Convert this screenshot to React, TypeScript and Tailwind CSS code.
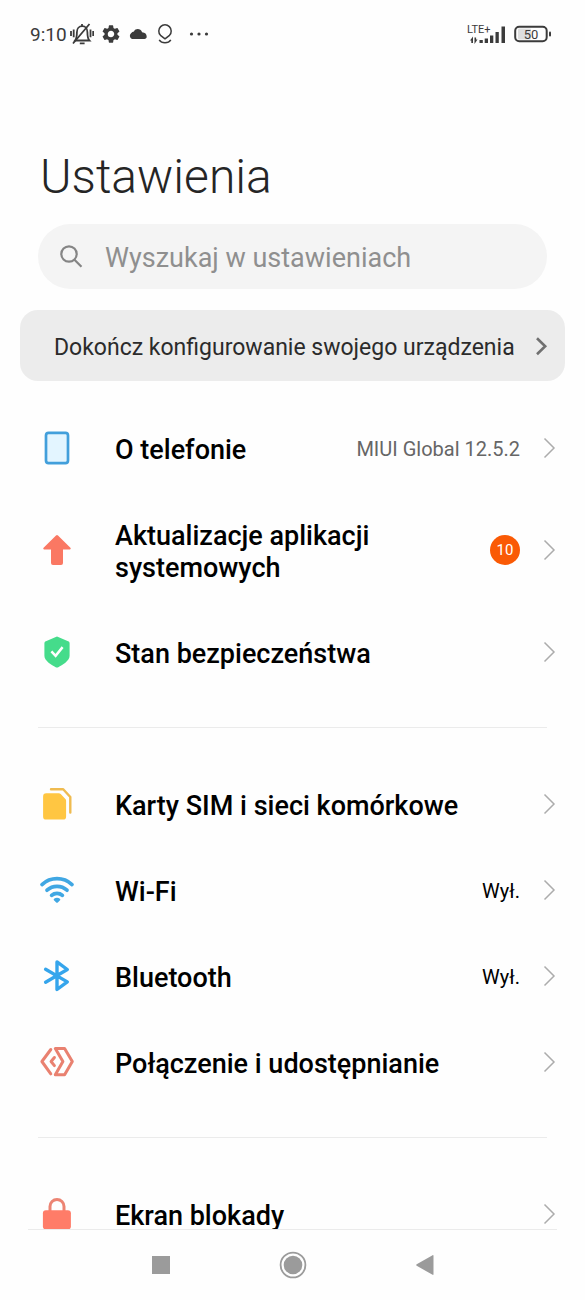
import type { ReactNode } from 'react';

function Chevron({ bold = false }: { bold?: boolean }) {
  return (
    <svg className="h-6 w-4 shrink-0" viewBox="0 0 16 24" fill="none" aria-hidden="true">
      {bold ? (
        <path d="M4 4.200 12.200 12.200 4 20.200" stroke="#707070" strokeWidth="2.600" />
      ) : (
        <path d="M3.500 2.500 13 12 3.500 21.500" stroke="#acacac" strokeWidth="1.500" />
      )}
    </svg>
  );
}

function Icon({ children }: { children: ReactNode }) {
  return (
    <svg className="size-9 shrink-0" viewBox="0 0 36 36" fill="none" aria-hidden="true">
      {children}
    </svg>
  );
}

const phoneIcon = (
  <Icon>
    <rect x="7" y="2.800" width="22" height="30.400" rx="2.600" fill="#e3f5ff" stroke="#429fdb" strokeWidth="2.700" />
  </Icon>
);

const updateIcon = (
  <Icon>
    <path
      d="M17 3.400a1.400 1.400 0 0 1 2 0L31.400 15.800c.7.800.3 1.600-.6 1.600H24V31a2 2 0 0 1-2 2h-8a2 2 0 0 1-2-2V17.400H5.200c-.9 0-1.300-.8-.6-1.600z"
      fill="#fa7863"
    />
  </Icon>
);

const shieldIcon = (
  <Icon>
    <path
      d="M16.800 2.900a2.500 2.500 0 0 1 2.400 0l9.900 4.300c1 .4 1.500 1.100 1.500 2.100v12.400c0 5.200-7.400 9.300-11.300 11.500a2.500 2.500 0 0 1-2.600 0C12.800 31 5.400 26.900 5.400 21.700V9.300c0-1 .5-1.700 1.500-2.100z"
      fill="#45dc8b"
    />
    <path d="m12.400 17.400 4.200 4.400 7-8.700" stroke="#fff" strokeWidth="2.500" />
  </Icon>
);

const simIcon = (
  <Icon>
    <path
      d="M7.300 7.200h12.600c.7 0 1.300.2 1.800.7l4.700 5c.5.500.7 1.100.7 1.800v15.700a3.200 3.200 0 0 1-3.200 3.200H7.300a3.200 3.200 0 0 1-3.200-3.200v-20a3.200 3.200 0 0 1 3.200-3.200z"
      fill="#ffc642"
    />
    <path d="M12 3.200h12.200l7.100 7.800v15.500" stroke="#efbb50" strokeWidth="2.400" strokeLinecap="round" strokeLinejoin="round" />
  </Icon>
);

const wifiIcon = (
  <Icon>
    <g stroke="#40a7e3" strokeWidth="3.700" strokeLinecap="round">
      <path d="M3 12.600C11.500 4.700 24.500 4.700 33 12.600" />
      <path d="M8 18.200c5.700-5.100 14.300-5.100 20 0" />
      <path d="M12.600 23.400c3.100-2.700 7.700-2.700 10.800 0" />
    </g>
    <path
      d="M15.100 26.800c1.700-1.300 4.100-1.300 5.800 0 .5.500.5 1.100.1 1.500l-2.200 2.100a1.200 1.200 0 0 1-1.600 0L15 28.300c-.4-.4-.4-1 .1-1.500z"
      fill="#40a7e3"
    />
  </Icon>
);

const bluetoothIcon = (
  <Icon>
    <path
      d="M6.600 11.300 28.300 23.900 18 31.500V3.900l10.300 7.600L6.600 24.200"
      stroke="#35a5ec"
      strokeWidth="3.400"
      strokeLinecap="round"
      strokeLinejoin="round"
    />
  </Icon>
);

const shareIcon = (
  <Icon>
    <g stroke="#e98170" strokeWidth="3" strokeLinecap="round" strokeLinejoin="round">
      <path d="M11.800 5.500 2.900 17.500l8.900 12.300" />
      <path d="M16.300 4.500h9.300l7.700 13-7.700 13.300h-9.300L23.900 17.500z" />
      <path d="m15.400 13.500-3.300 4 3.300 4.100" />
    </g>
  </Icon>
);

const lockIcon = (
  <Icon>
    <path d="M11 16v-5.500a7 7 0 0 1 14 0V16" stroke="#ec8473" strokeWidth="3" />
    <rect x="3.900" y="14.200" width="28" height="19.200" rx="3" fill="#ff7c68" />
  </Icon>
);

interface RowProps {
  icon: ReactNode;
  label: string;
  children?: ReactNode;
}

function Row({ icon, label, children }: RowProps) {
  return (
    <li>
      <a href="#" className="flex items-center py-[25px] pr-7 pl-[39px]">
        {icon}
        <span className="ml-10 min-w-0 flex-1 pt-1 text-[27px] leading-8 font-medium">{label}</span>
        <span className="ml-5 flex shrink-0 items-center gap-[21px]">
          {children}
          <Chevron />
        </span>
      </a>
    </li>
  );
}

function Divider() {
  return <li role="separator" className="mx-[38px] mt-8 mb-[33px] h-px bg-[#ebebeb]" />;
}

function StatusBar() {
  return (
    <header className="flex h-[68px] shrink-0 items-center justify-between pr-[33px] pl-[30px] text-[#3b3b3b]">
      <div className="flex items-center">
        <span className="pt-0.5 text-[19px] leading-6">9:10</span>
        <svg className="ml-[3px] h-6 w-6" viewBox="0 0 24 24" fill="none" stroke="currentColor" strokeWidth="1.800" aria-label="Wyciszony">
          <path d="M5 18.500h14.500c-1.800-1.900-2.100-3.800-2.100-8.300 0-3.700-2.100-6-5.200-6s-5.300 2.300-5.300 6c0 4.500-.3 6.400-1.900 8.300z" />
          <path d="M12 2v2M9.800 21.300h4.800M1 9v5M3.700 7.500v7.700M20.500 7.500v7.700M23.200 9v5M19.500 2 3 21.500" />
        </svg>
        <svg className="ml-2 h-[18px] w-[18px]" viewBox="2 2 20 20" fill="currentColor" aria-label="Ustawienia">
          <path d="M19.140 12.940c.04-.3.060-.61.060-.94 0-.32-.02-.64-.07-.94l2.030-1.580a.49.49 0 0 0 .12-.61l-1.920-3.320a.488.488 0 0 0-.59-.22l-2.390.96c-.5-.38-1.030-.7-1.620-.94l-.36-2.540a.484.484 0 0 0-.48-.41h-3.840a.484.484 0 0 0-.47.410l-.36 2.540c-.59.240-1.130.570-1.620.940l-2.390-.96a.49.49 0 0 0-.59.220L2.740 8.870a.47.47 0 0 0 .12.610l2.030 1.580c-.05.300-.09.630-.09.940s.02.640.07.940l-2.030 1.580a.49.49 0 0 0-.12.610l1.920 3.320c.12.220.370.290.590.220l2.390-.96c.5.380 1.030.700 1.620.940l.36 2.540c.05.240.240.410.480.410h3.840c.240 0 .440-.170.470-.410l.36-2.540c.59-.240 1.130-.560 1.620-.940l2.390.960c.220.080.470 0 .590-.220l1.920-3.320a.47.47 0 0 0-.12-.61zM12 15.600A3.610 3.610 0 0 1 8.400 12c0-1.980 1.620-3.600 3.600-3.600s3.600 1.620 3.600 3.600-1.620 3.600-3.600 3.600" />
        </svg>
        <svg className="ml-2 h-3 w-5" viewBox="0 0 20 12" fill="currentColor" aria-label="Chmura">
          <path d="M4 11a3.400 3.400 0 0 1-.7-5.900A3 3 0 0 1 6 3.400C7.500-.1 12.800.2 14.100 4.200c3 .1 4.600 2 4.600 4.600 0 1.300-1 2.200-2.200 2.200z" />
        </svg>
        <svg className="ml-[9px] h-5 w-4" viewBox="0 0 16 20" fill="none" stroke="currentColor" strokeWidth="1.500" aria-label="Lokalizacja">
          <path d="M8 14.800 3.500 11.300a6.200 6.200 0 1 1 9 0z" strokeLinejoin="round" />
          <path d="M2.200 15.800c2.500 3.800 9.100 3.800 11.600 0" />
        </svg>
        <svg className="ml-4 h-1 w-5" viewBox="0 0 20 4" fill="currentColor" aria-label="Więcej">
          <circle cx="2.500" cy="2" r="1.600" />
          <circle cx="10" cy="2" r="1.600" />
          <circle cx="17.500" cy="2" r="1.600" />
        </svg>
      </div>
      <div className="flex items-center gap-[7px]">
        <svg className="h-6 w-10" viewBox="0 0 40 24" fill="currentColor" aria-label="Zasięg">
          <text x="0" y="10.500" fontSize="11">LTE+</text>
          <path d="M3 18.500 6 14.500V21H4.300v-2.500zM10.500 17.500l-3 4.500v-6.500h1.600v2z" />
          <path d="M12.500 18h3.300v3h-3.300zM17.700 16.500H21V21h-3.300zM23 13.500h3.300V21H23zM28.500 10h3.300v11h-3.300zM34.500 4.500h3.500V21h-3.500z" />
        </svg>
        <svg className="h-[18px] w-[38px]" viewBox="0 0 38 18" fill="none" aria-label="Bateria 50">
          <rect x="4" y="3.500" width="13" height="11" rx="1" fill="#dedede" />
          <rect x="1.200" y="1.700" width="31.500" height="14.600" rx="4" stroke="currentColor" strokeWidth="2" />
          <rect x="35" y="6.500" width="2" height="5" rx="1" fill="currentColor" />
          <text x="17" y="13.500" textAnchor="middle" fontSize="13" fill="currentColor">50</text>
        </svg>
      </div>
    </header>
  );
}

function NavigationBar() {
  return (
    <nav className="flex h-[70px] shrink-0 items-center justify-center gap-[104px] text-[#9b9b9b]">
      <button type="button" aria-label="Ostatnie" className="flex size-7 items-center justify-center">
        <svg className="size-[18px]" viewBox="0 0 18 18" aria-hidden="true">
          <rect width="18" height="18" fill="currentColor" />
        </svg>
      </button>
      <button type="button" aria-label="Ekran główny" className="flex size-7 items-center justify-center">
        <svg className="size-7" viewBox="0 0 28 28" fill="none" aria-hidden="true">
          <circle cx="14" cy="14" r="12.400" stroke="currentColor" strokeWidth="1.800" />
          <circle cx="14" cy="14" r="9.300" fill="currentColor" />
        </svg>
      </button>
      <button type="button" aria-label="Wstecz" className="flex size-7 items-center justify-center">
        <svg className="h-5 w-[18px]" viewBox="0 0 18 20" fill="currentColor" aria-hidden="true">
          <path d="M16.600.2c.5-.3.900 0 .900.500v18.600c0 .5-.4.800-.900.500L.7 10.800c-.6-.4-.6-1.200 0-1.600z" />
        </svg>
      </button>
    </nav>
  );
}

export default function App() {
  return (
    <div className="flex h-dvh flex-col bg-[#fefefe] font-[Roboto,sans-serif] text-black">
      <StatusBar />
      <main className="min-h-0 flex-1 overflow-y-auto [scrollbar-width:none]">
        <h1 className="mt-[82px] ml-10 text-[48px] leading-[54px] font-light text-[#252525]">Ustawienia</h1>
        <label className="mx-[38px] mt-5 flex h-[65px] items-center rounded-full bg-[#f4f4f4] pr-8 pl-[22px]">
          <svg className="size-6 shrink-0" viewBox="0 0 24 24" fill="none" stroke="#858585" strokeWidth="2.200" aria-hidden="true">
            <circle cx="9" cy="9" r="7.700" />
            <path d="m14.500 14.700 7 7" />
          </svg>
          <input
            type="search"
            aria-label="Wyszukaj w ustawieniach"
            placeholder="Wyszukaj w ustawieniach"
            className="ml-[21px] min-w-0 flex-1 bg-transparent pt-0.5 text-[27px] leading-8 outline-none placeholder:text-[#8f8f8f]"
          />
        </label>
        <a href="#" className="mx-5 mt-[21px] flex h-[71px] items-center justify-between rounded-[18px] bg-[#ececec] pr-4 pl-[34px] text-[#2b2b2b]">
          <span className="pt-1 text-[23px] leading-7">Dokończ konfigurowanie swojego urządzenia</span>
          <Chevron bold />
        </a>
        <ul className="mt-6">
          <Row icon={phoneIcon} label="O telefonie">
            <span className="pt-0.5 text-[20px] leading-6 text-[#666]">MIUI Global 12.5.2</span>
          </Row>
          <Row icon={updateIcon} label="Aktualizacje aplikacji systemowych">
            <span className="flex size-[30px] items-center justify-center rounded-full bg-[#fa5a05] text-[15px] leading-5 text-white">10</span>
          </Row>
          <Row icon={shieldIcon} label="Stan bezpieczeństwa" />
          <Divider />
          <Row icon={simIcon} label="Karty SIM i sieci komórkowe" />
          <Row icon={wifiIcon} label="Wi-Fi">
            <span className="pt-0.5 text-[20px] leading-6">Wył.</span>
          </Row>
          <Row icon={bluetoothIcon} label="Bluetooth">
            <span className="pt-0.5 text-[20px] leading-6">Wył.</span>
          </Row>
          <Row icon={shareIcon} label="Połączenie i udostępnianie" />
          <Divider />
          <Row icon={lockIcon} label="Ekran blokady" />
        </ul>
      </main>
      <div className="mx-7 h-px shrink-0 bg-[#ebebeb]" />
      <NavigationBar />
    </div>
  );
}
